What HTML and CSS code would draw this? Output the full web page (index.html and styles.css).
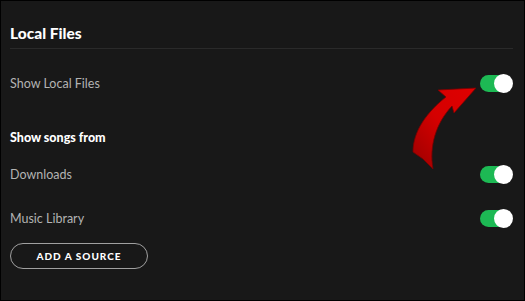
FILE: index.html
```html
<!DOCTYPE html>
<html lang="en">
<head>
<meta charset="utf-8">
<title>Local Files</title>
<link rel="stylesheet" href="styles.css">
</head>
<body>
<div class="panel">
  <h2 class="title">Local Files</h2>
  <div class="row row-first">
    <span class="label">Show Local Files</span>
    <span class="toggle"><span class="knob"></span></span>
  </div>
  <h3 class="subhead">Show songs from</h3>
  <div class="row row-dl">
    <span class="label">Downloads</span>
    <span class="toggle"><span class="knob"></span></span>
  </div>
  <div class="row row-ml">
    <span class="label">Music Library</span>
    <span class="toggle"><span class="knob"></span></span>
  </div>
  <button class="add-btn">Add a source</button>
  <svg class="arrow" viewBox="0 0 525 301" width="525" height="301" aria-hidden="true">
    <defs>
      <linearGradient id="ag" x1="0" y1="1" x2="1" y2="0">
        <stop offset="0" stop-color="#9a0000"/>
        <stop offset="0.5" stop-color="#d40000"/>
        <stop offset="1" stop-color="#e00000"/>
      </linearGradient>
    </defs>
    <path d="M476,88 L438,90 L446,97 C427,112 413,131 413,152 L423,159 L433,169 C429,146 436,123 452,106 L454,113 Z" fill="url(#ag)" stroke="#7a0000" stroke-width="0.8" stroke-linejoin="round"/>
  </svg>
</div>
</body>
</html>
```
FILE: styles.css
```css
html, body {
  margin: 0;
  padding: 0;
  background: #181818;
}
.panel {
  position: relative;
  width: 525px;
  height: 301px;
  box-sizing: border-box;
  border: 1px solid #000;
  background: #181818;
  padding: 0 11px 0 9px;
  font-family: Lato, "Liberation Sans", sans-serif;
  color: #b3b3b3;
  overflow: hidden;
}
.title {
  margin: 0;
  padding: 22px 0 5px;
  line-height: 20px;
  font-size: 15.5px;
  font-weight: 900;
  color: #fff;
  border-bottom: 1px solid #2a2a2a;
}
.row {
  display: flex;
  justify-content: space-between;
  align-items: center;
}
.row-first { height: 68px; }
.row-dl { height: 44px; }
.row-ml { height: 45px; }
.label {
  font-size: 12.5px;
  color: #b3b3b3;
}
.subhead {
  margin: 0;
  padding-top: 6px;
  line-height: 29px;
  font-size: 12.5px;
  font-weight: 900;
  color: #fff;
}
.toggle {
  position: relative;
  width: 31px;
  height: 17px;
  border-radius: 9px;
  background: #1db954;
  margin-right: 2px;
}
.knob {
  position: absolute;
  right: -2px;
  top: -1px;
  width: 19px;
  height: 19px;
  border-radius: 50%;
  background: #fff;
}
.add-btn {
  display: block;
  margin-top: 2px;
  width: 138px;
  height: 26px;
  padding: 0;
  border: 1px solid #a0a0a0;
  border-radius: 500px;
  background: transparent;
  color: #fff;
  font-family: Lato, "Liberation Sans", sans-serif;
  font-size: 10px;
  font-weight: 900;
  letter-spacing: 1px;
  text-transform: uppercase;
}
.arrow {
  position: absolute;
  left: -1px;
  top: -1px;
  pointer-events: none;
}
```
